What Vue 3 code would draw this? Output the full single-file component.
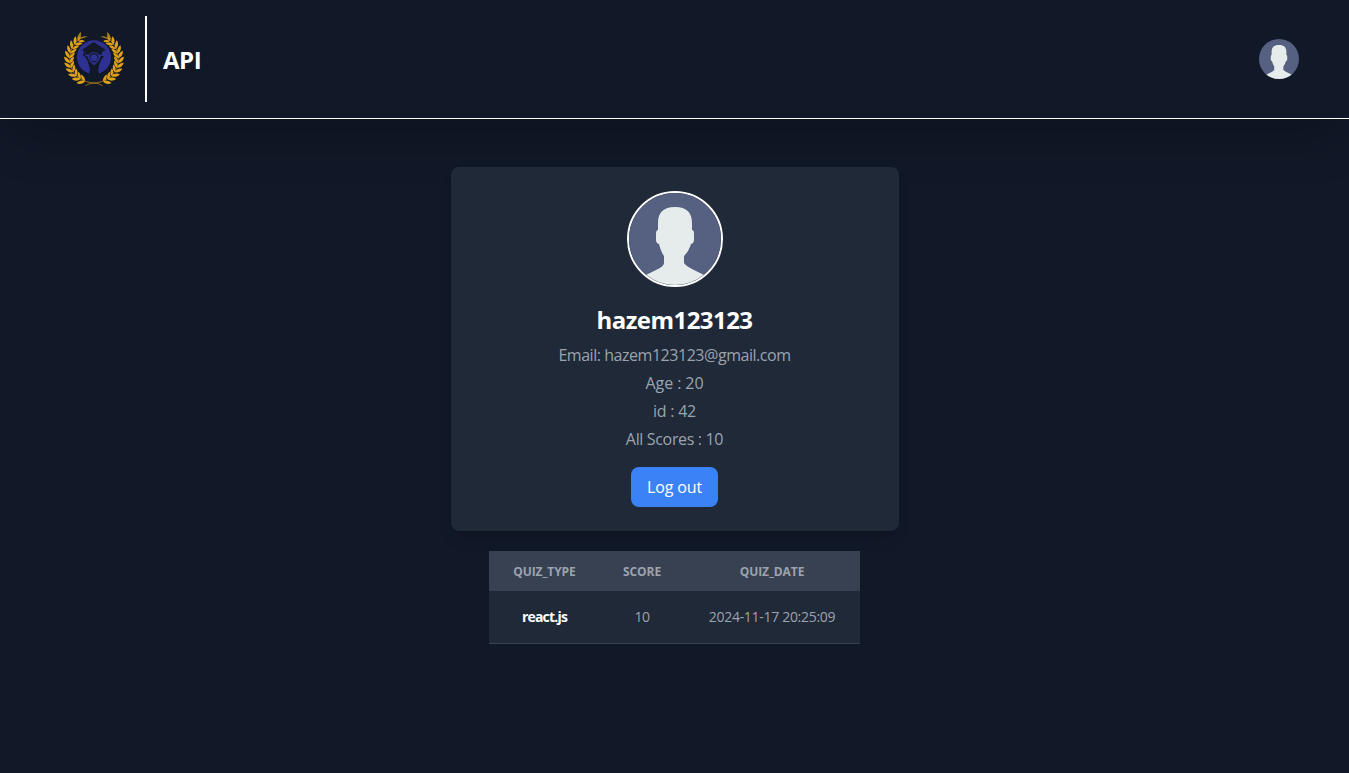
<script setup>
const details = [
  { text: 'Email: hazem123123@gmail.com', cls: 'email' },
  { text: 'Age : 20', cls: 'age' },
  { text: 'id : 42', cls: 'ident' },
  { text: 'All Scores : 10', cls: 'scores' },
]
const rows = [{ type: 'react.js', score: 10, date: '2024-11-17 20:25:09' }]

// Pairs of laurel leaves along the left branch, mirrored for the right one.
const leaves = []
for (let i = 0; i < 11; i++) {
  const deg = 22 + i * 11.8
  const a = (deg * Math.PI) / 180
  const x = 132 - 73 * Math.sin(a)
  const y = 118 + 71 * Math.cos(a)
  const dir = 180 + deg
  const s = i > 9 ? 0.85 : 1
  leaves.push({ x, y, r: dir - 34, s: s * 1.12 }, { x, y, r: dir + 40, s })
}
</script>

<template>
  <div class="page">
    <header class="bar">
      <div class="brand">
        <svg class="logo" viewBox="42 36 180 162">
          <defs>
            <g id="branch">
              <path d="M158 197Q147 189 124 188A73 71 0 0 1 59 118Q60 74 92 54" fill="none" stroke="#c8921a" stroke-width="2" />
              <path
                v-for="(l, i) in leaves"
                :key="i"
                d="M0 0C6-6 16-6 23 0C16 5 6 5 0 0Z"
                fill="#dfa216"
                :transform="`translate(${l.x} ${l.y}) rotate(${l.r}) scale(${l.s})`"
              />
              <path d="M86 60Q95 46 113 50Q100 52 86 60Z" fill="#a87a1a" />
              <path d="M80 60Q83 42 93 36Q95 50 80 60Z" fill="#a87a1a" />
            </g>
          </defs>
          <use href="#branch" />
          <use href="#branch" transform="translate(264 0) scale(-1 1)" />
          <circle cx="132" cy="112" r="53" fill="#111827" />
          <circle cx="132" cy="112" r="51" fill="#2e3192" />
          <g fill="#111827">
            <path d="M96 90L131 66L168 90L156 95V104H147Q143 96 132 96Q121 96 117 104H108V95L105 108H99L102 93Z" />
            <path d="M104 108H112Q118 124 132 135Q146 124 152 108H162Q150 123 147 137Q143 149 147 164H117Q122 149 117 137Q114 121 104 108Z" />
            <circle cx="132" cy="113" r="14" />
          </g>
          <circle cx="132" cy="113" r="10.5" fill="#2e3192" />
          <path d="M113 104Q117 122 132 134Q147 122 151 104" fill="none" stroke="#2e3192" stroke-width="4" />
        </svg>
        <span class="rule"></span>
        <span class="name">API</span>
      </div>
      <svg class="mini" viewBox="0 0 92 92">
        <rect width="92" height="92" fill="#566080" />
        <path class="person" d="M46 14C34 14 29 20 29 30V37Q27 37 27 41V47Q27 50 30 51Q32 59 35 63V71Q35 73 29 76L13 84V92H79V84L63 76Q57 73 56 71V63Q60 58 62 51Q65 50 65 47V41Q65 37 63 37V30C63 20 58 14 46 14Z" />
      </svg>
    </header>

    <main>
      <section class="card">
        <div class="avatar">
          <svg viewBox="0 0 92 92">
            <rect width="92" height="92" fill="#566080" />
            <path class="person" d="M46 14C34 14 29 20 29 30V37Q27 37 27 41V47Q27 50 30 51Q32 59 35 63V70Q35 73 29 76L13 84V92H79V84L63 76Q57 73 55 70V63Q60 58 62 51Q65 50 65 47V41Q65 37 63 37V30C63 20 58 14 46 14Z" />
            <path d="M17 82A46 46 0 0 0 75 82" fill="none" stroke="#919eaa" stroke-width="0.8" />
          </svg>
        </div>
        <h1><span>hazem123123</span></h1>
        <p v-for="d in details" :key="d.text"><span :class="d.cls">{{ d.text }}</span></p>
        <button><span>Log out</span></button>
      </section>

      <table>
        <colgroup><col class="c1" /><col class="c2" /><col class="c3" /></colgroup>
        <thead>
          <tr><th>QUIZ_TYPE</th><th>SCORE</th><th>QUIZ_DATE</th></tr>
        </thead>
        <tbody>
          <tr v-for="r in rows" :key="r.date">
            <td class="type">{{ r.type }}</td>
            <td class="score">{{ r.score }}</td>
            <td class="date">{{ r.date }}</td>
          </tr>
        </tbody>
      </table>
    </main>
  </div>
</template>

<style>
body { background: #111827; }
</style>

<style scoped>
* { box-sizing: border-box; }
.page {
  height: 773px;
  overflow: hidden;
  background: #111827;
  color: #fff;
  font-family: "Segoe UI", "Open Sans", "Noto Sans", sans-serif;
}
.bar {
  height: 119px;
  padding: 0 50px 0 64px;
  display: flex;
  align-items: center;
  justify-content: space-between;
  border-bottom: 1px solid #fff;
  box-shadow: 0 25px 50px -12px rgba(0, 0, 0, .25);
}
.brand { display: flex; align-items: center; }
.logo { width: 60px; height: 54px; }
.rule { width: 2px; height: 86px; margin: 0 16px 0 21px; background: #fff; }
.name { padding-top: 2px; font-size: 24px; line-height: 32px; font-weight: 700; letter-spacing: -.5px; }
.mini { width: 40px; height: 40px; border-radius: 50%; }
.person { fill: #e6ecec; }
main { display: flex; flex-direction: column; align-items: center; padding-top: 48px; }
.card {
  width: 448px;
  height: 364px;
  padding: 24px;
  border-radius: 8px;
  background: #1f2937;
  display: flex;
  flex-direction: column;
  align-items: center;
  box-shadow: 0 10px 15px -3px rgba(0, 0, 0, .1), 0 4px 6px -4px rgba(0, 0, 0, .1);
}
.avatar { width: 96px; height: 96px; border: 2px solid #fff; border-radius: 50%; overflow: hidden; flex: none; }
.avatar svg { display: block; width: 92px; height: 92px; }
h1 { margin: 17px 0 0; font-size: 24px; line-height: 32px; font-weight: 700; letter-spacing: -.55px; }
p { margin: 4px 0 0; font-size: 16px; line-height: 24px; color: #9ca3af; }
h1 + p { margin-top: 7px; }
.email { letter-spacing: -.46px; }
.age { letter-spacing: -.08px; }
.ident { letter-spacing: -.25px; }
.scores { letter-spacing: -.34px; }
button {
  width: 87px;
  height: 40px;
  margin-top: 16px;
  padding: 0;
  border: 0;
  border-radius: 8px;
  background: #3b82f6;
  color: #fff;
  font: 16px/24px "Segoe UI", "Open Sans", "Noto Sans", sans-serif;
  letter-spacing: -.15px;
}
table { width: 371px; margin-top: 20px; table-layout: fixed; border-collapse: separate; border-spacing: 0; text-align: center; color: #9ca3af; }
.c1 { width: 111px; }
.c2 { width: 84px; }
.c3 { width: 176px; }
th { height: 40px; padding: 2px 0 0; background: #374151; font-size: 12px; line-height: 16px; font-weight: 700; letter-spacing: -.08px; white-space: nowrap; }
td { height: 53px; padding: 0; background: #1f2937; border-bottom: 1px solid #374151; font-size: 14px; line-height: 20px; white-space: nowrap; }
.type { color: #fff; font-weight: 700; letter-spacing: -.8px; }
.score { letter-spacing: -.4px; }
.date { letter-spacing: -.3px; }
</style>
